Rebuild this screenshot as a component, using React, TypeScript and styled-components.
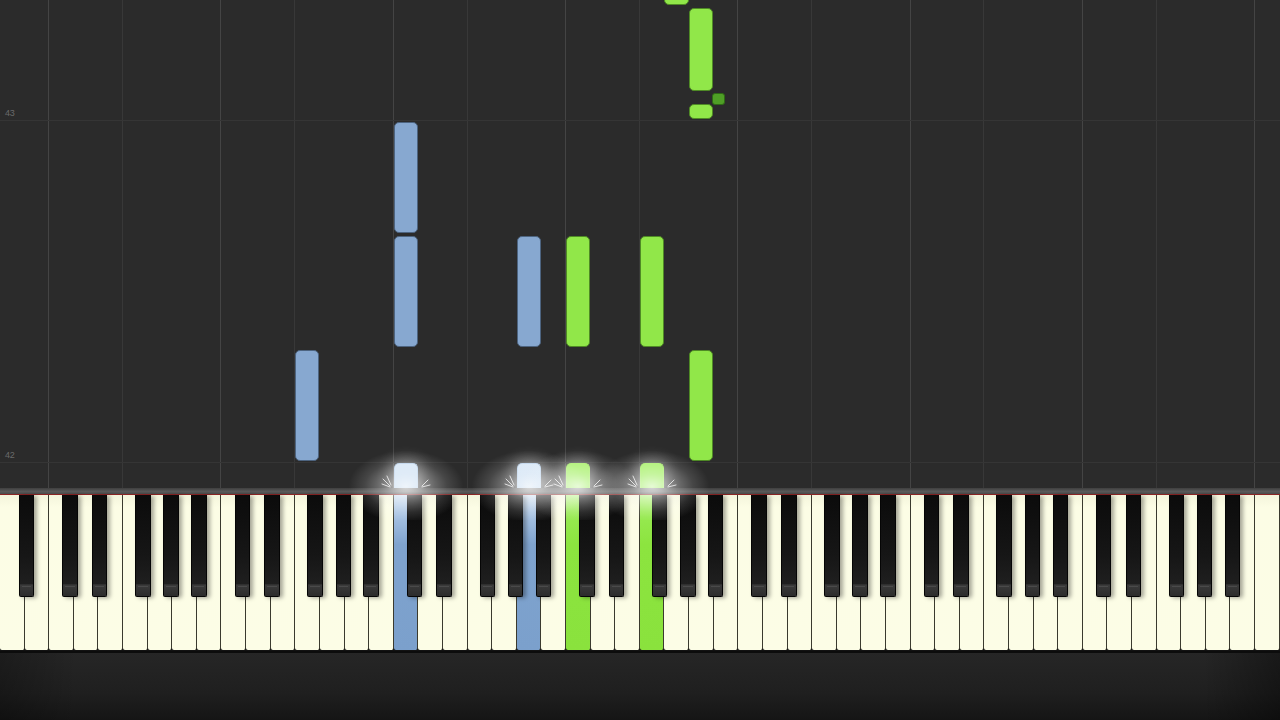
import React from "react";
import styled, { createGlobalStyle, css } from "styled-components";

const GlobalStyle = createGlobalStyle`
  html, body { margin: 0; padding: 0; background: #2b2b2b; }
  body { font-family: "Liberation Sans", Arial, sans-serif; overflow: hidden; }
  #root { width: 1280px; height: 720px; }
`;

const WHITE_COUNT = 52;
const NAMES = ["A", "B", "C", "D", "E", "F", "G"];
/* distance from a white key's right edge to the right edge of the black key that follows it */
const BLACK_SHIFT: Record<string, number> = { A: -10.8, C: -5, D: -10, F: -4, G: -7.5 };

type Tone = "blue" | "green" | "dark";

const FILL: Record<Tone, string> = { blue: "#87a8d0", green: "#91e749", dark: "#4f9f26" };
const EDGE: Record<Tone, string> = { blue: "#4d6480", green: "#4f8a25", dark: "#2f6a15" };

const Page = styled.div`
  width: 1280px;
  height: 720px;
  display: flex;
  flex-direction: column;
  background: #2b2b2b;
  overflow: hidden;
`;

const Roll = styled.div`
  position: relative;
  z-index: 2;
  flex: 0 0 488px;
  display: flex;
  background: #2b2b2b;
`;

const Lane = styled.div<{ $line: "C" | "F" | null }>`
  position: relative;
  flex: 1 1 0;
  ${(p) =>
    p.$line &&
    css`
      &::before {
        content: "";
        position: absolute;
        top: 0;
        bottom: 0;
        left: -1px;
        width: 1px;
        background: ${p.$line === "C" ? "#444444" : "#383838"};
      }
    `}
`;

const MeasureMark = styled.div.attrs<{ $top: number }>((p) => ({ style: { top: p.$top } }))<{
  $top: number;
}>`
  position: absolute;
  left: 0;
  right: 0;
  height: 1px;
  background: #353535;
  pointer-events: none;
  & > span {
    position: absolute;
    left: 5px;
    bottom: 3px;
    font-size: 9px;
    line-height: 10px;
    color: #6a6a6a;
    letter-spacing: -0.3px;
  }
`;

const Note = styled.div.attrs<{ $top: number; $h: number }>((p) => ({
  style: { top: p.$top, height: p.$h },
}))<{ $top: number; $h: number; $tone: Tone; $lit?: boolean }>`
  position: absolute;
  left: 0;
  right: 0.5px;
  box-sizing: border-box;
  border-radius: 5px;
  background: ${(p) => FILL[p.$tone]};
  border: 1px solid ${(p) => EDGE[p.$tone]};
  ${(p) =>
    p.$lit &&
    css`
      z-index: 1;
      border-radius: 5px 5px 0 0;
      border-bottom: none;
      border-color: ${p.$tone === "blue" ? "#b9d1ea" : "#a6ee68"};
      background: ${p.$tone === "blue"
        ? "linear-gradient(#d6e6f6, #bcd5ee)"
        : "linear-gradient(#a6f066, #98ec55)"};
      box-shadow: 0 0 14px 4px rgba(255, 255, 255, 0.3);
    `}
`;

const SharpNote = styled.div.attrs<{ $top: number; $h: number }>((p) => ({
  style: { top: p.$top, height: p.$h },
}))<{ $top: number; $h: number }>`
  position: absolute;
  right: -11px;
  width: 13px;
  box-sizing: border-box;
  border-radius: 3px;
  background: ${FILL.dark};
  border: 1px solid ${EDGE.dark};
  z-index: 1;
`;

const Glow = styled.div`
  position: absolute;
  left: 50%;
  top: 450px;
  width: 116px;
  height: 70px;
  margin-left: -58px;
  pointer-events: none;
  z-index: 2;
  background: radial-gradient(
    ellipse at 50% 52%,
    rgba(255, 255, 255, 0.75) 0%,
    rgba(255, 255, 255, 0.4) 24%,
    rgba(255, 255, 255, 0.13) 50%,
    rgba(255, 255, 255, 0) 70%
  );
`;

const Spark = styled.svg`
  position: absolute;
  left: 50%;
  top: 466px;
  margin-left: -30px;
  pointer-events: none;
  overflow: visible;
  z-index: 3;
`;

const KeyBed = styled.div`
  display: flex;
  flex-direction: column;
  flex: 0 0 auto;
`;

const Rail = styled.div`
  height: 6px;
  background: linear-gradient(#3f3f3f, #5a5a5a 60%, #4a4a4a);
`;

const RedEdge = styled.div`
  height: 1px;
  background: #8a2424;
`;

const Keyboard = styled.div`
  display: flex;
  height: 156px;
  background: #121212;
`;

const WhiteKey = styled.div<{ $tone?: Tone }>`
  position: relative;
  flex: 1 1 0;
  box-sizing: border-box;
  height: 155px;
  border-right: 1px solid #3a3a2e;
  border-radius: 0 0 2px 2px;
  background: ${(p) =>
    p.$tone === "blue"
      ? "linear-gradient(#c9dcef 0%, #a4c0e1 14%, #7fa3ce 32%, #7ba0cc 100%)"
      : p.$tone === "green"
      ? "linear-gradient(#b3f27c 0%, #96e94f 14%, #8ce43f 32%, #8ae23d 100%)"
      : "linear-gradient(#f4f5dc 0%, #fcfde5 8%, #fcfde6 100%)"};
`;

const BlackKey = styled.div<{ $shift: number }>`
  position: absolute;
  top: 0;
  right: ${(p) => p.$shift}px;
  width: 15.5px;
  height: 102px;
  z-index: 1;
  box-sizing: border-box;
  border: 1px solid #050505;
  border-top: none;
  border-radius: 0 0 2px 2px;
  background: linear-gradient(#0b0b0b 0%, #161616 60%, #1f1f1f 88%, #3a3a3a 89%, #2c2c2c 100%);
  box-shadow: 3px 1px 4px rgba(0, 0, 0, 0.35);
  &::after {
    content: "";
    position: absolute;
    left: 2px;
    right: 2px;
    bottom: 9px;
    height: 1px;
    background: #4a4a4a;
  }
`;

const Floor = styled.div`
  flex: 1 1 auto;
  border-top: 2px solid #0c0c0c;
  background:
    linear-gradient(90deg, rgba(0, 0, 0, 0.25) 0%, rgba(0, 0, 0, 0) 6%, rgba(0, 0, 0, 0) 94%, rgba(0, 0, 0, 0.35) 100%),
    linear-gradient(#262626 0%, #1f1f1f 60%, #151515 100%);
`;

type NoteSpec = { y: number; h: number; tone: Tone; lit?: boolean };

const laneNotes: Record<number, NoteSpec[]> = {
  12: [{ y: 350, h: 111, tone: "blue" }],
  16: [
    { y: 122, h: 111, tone: "blue" },
    { y: 236, h: 111, tone: "blue" },
    { y: 463, h: 25, tone: "blue", lit: true },
  ],
  21: [
    { y: 236, h: 111, tone: "blue" },
    { y: 463, h: 25, tone: "blue", lit: true },
  ],
  23: [
    { y: 236, h: 111, tone: "green" },
    { y: 463, h: 25, tone: "green", lit: true },
  ],
  26: [
    { y: 236, h: 111, tone: "green" },
    { y: 463, h: 25, tone: "green", lit: true },
  ],
  27: [{ y: -10, h: 15, tone: "green" }],
  28: [
    { y: 8, h: 83, tone: "green" },
    { y: 104, h: 15, tone: "green" },
    { y: 350, h: 111, tone: "green" },
  ],
};

/* sharp (black-key) notes, keyed by the white lane they follow */
const sharpNotes: Record<number, { y: number; h: number }[]> = {
  28: [{ y: 93, h: 12 }],
};

const pressed: Record<number, Tone> = { 16: "blue", 21: "blue", 23: "green", 26: "green" };

const lanes = Array.from({ length: WHITE_COUNT }, (_, i) => i);

function laneLine(i: number): "C" | "F" | null {
  const n = NAMES[i % 7];
  return n === "C" || n === "F" ? n : null;
}

export default function App() {
  return (
    <Page>
      <GlobalStyle />
      <Roll>
        {lanes.map((i) => {
          const list = laneNotes[i] || [];
          return (
            <Lane key={i} $line={laneLine(i)}>
              {list.map((n, k) => (
                <Note key={k} $top={n.y} $h={n.h} $tone={n.tone} $lit={n.lit} />
              ))}
              {(sharpNotes[i] || []).map((s, k) => (
                <SharpNote key={`s${k}`} $top={s.y} $h={s.h} />
              ))}
              {list.some((n) => n.lit) && (
                <>
                  <Glow />
                  <Spark width="60" height="30">
                    <g stroke="rgba(255,255,255,0.75)" strokeWidth="1" strokeLinecap="round">
                      <line x1="14" y1="20" x2="7" y2="13" />
                      <line x1="14" y1="21" x2="6" y2="18" />
                      <line x1="15" y1="19" x2="11" y2="10" />
                      <line x1="46" y1="20" x2="52" y2="14" />
                      <line x1="46" y1="21" x2="54" y2="19" />
                    </g>
                  </Spark>
                </>
              )}
            </Lane>
          );
        })}
        <MeasureMark $top={120}>
          <span>43</span>
        </MeasureMark>
        <MeasureMark $top={462}>
          <span>42</span>
        </MeasureMark>
      </Roll>
      <KeyBed>
        <Rail />
        <RedEdge />
        <Keyboard>
          {lanes.map((i) => {
            const shift = BLACK_SHIFT[NAMES[i % 7]];
            return (
              <WhiteKey key={i} $tone={pressed[i]}>
                {shift !== undefined && i < WHITE_COUNT - 1 && <BlackKey $shift={shift} />}
              </WhiteKey>
            );
          })}
        </Keyboard>
      </KeyBed>
      <Floor />
    </Page>
  );
}
